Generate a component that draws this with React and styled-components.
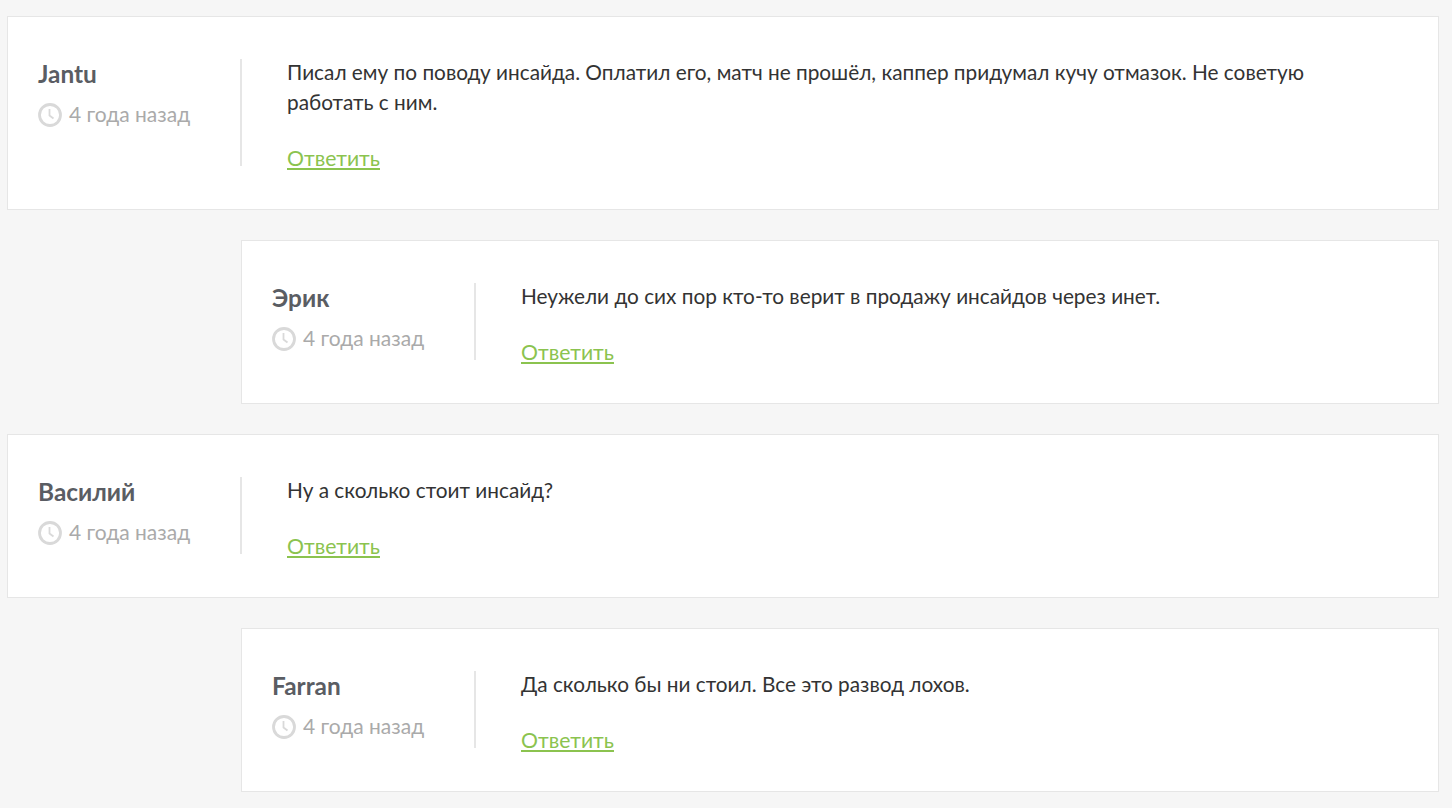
import React from "react";
import styled, { createGlobalStyle } from "styled-components";

const GlobalStyle = createGlobalStyle`
  html, body {
    margin: 0;
    background: #f6f6f6;
  }
  body {
    font-family: "Lato", "Liberation Sans", sans-serif;
    overflow: hidden;
  }
`;

const comments = [
  {
    id: 1,
    name: "Jantu",
    text: "Писал ему по поводу инсайда. Оплатил его, матч не прошёл, каппер придумал кучу отмазок. Не советую работать с ним.",
  },
  {
    id: 2,
    name: "Эрик",
    reply: true,
    text: "Неужели до сих пор кто-то верит в продажу инсайдов через инет.",
  },
  { id: 3, name: "Василий", text: "Ну а сколько стоит инсайд?" },
  {
    id: 4,
    name: "Farran",
    reply: true,
    text: "Да сколько бы ни стоил. Все это развод лохов.",
  },
];

const ClockIcon = () => (
  <Clock viewBox="0 0 24 24" aria-hidden="true">
    <circle cx="12" cy="12" r="10.5" fill="none" stroke="#d9d9d9" strokeWidth="2.8" />
    <path d="M11.5 6v6.5l4 3" fill="none" stroke="#d9d9d9" strokeWidth="1.8" />
  </Clock>
);

const App = () => {
  return (
    <>
      <GlobalStyle />
      <Page>
        {comments.map((comment) => (
          <Card key={comment.id} $reply={comment.reply}>
            <Author>
              <Name>{comment.name}</Name>
              <Meta>
                <ClockIcon />
                <span>4 года назад</span>
              </Meta>
            </Author>
            <Body>
              <Text>{comment.text}</Text>
              <ReplyLink href="#">Ответить</ReplyLink>
            </Body>
          </Card>
        ))}
      </Page>
    </>
  );
};

const Page = styled.div`
  display: flex;
  flex-direction: column;
  gap: 30px;
  padding: 16px 13px 0 7px;
`;

const Card = styled.div`
  display: flex;
  margin-left: ${(props) => (props.$reply ? "234px" : "0")};
  padding: 42px 30px 43px 30px;
  background: #fff;
  border: 1px solid #e6e6e6;
`;

const Author = styled.div`
  flex: 0 0 204px;
  box-sizing: border-box;
  border-right: 2px solid #e6e6e6;
`;

const Name = styled.div`
  font-size: 24.4px;
  font-weight: 700;
  line-height: 30px;
  color: #5a5d63;
`;

const Meta = styled.div`
  display: flex;
  align-items: center;
  gap: 7px;
  margin-top: 10px;
  font-size: 21px;
  line-height: 30px;
  color: #aaaaaa;
`;

const Clock = styled.svg`
  width: 24px;
  height: 24px;
  flex: none;
  margin-top: 1px;
`;

const Body = styled.div`
  flex: 1;
  padding: 0 100px 0 45px;
`;

const Text = styled.p`
  margin: -2px 0 34px;
  font-size: 20.8px;
  line-height: 30px;
  color: #333333;
`;

const ReplyLink = styled.a`
  display: block;
  width: fit-content;
  margin-bottom: 1px;
  font-size: 21.2px;
  line-height: 14px;
  color: #8bc34f;
  text-decoration: underline;
  text-underline-offset: 2px;
  text-decoration-thickness: 2px;
`;

export default App;
